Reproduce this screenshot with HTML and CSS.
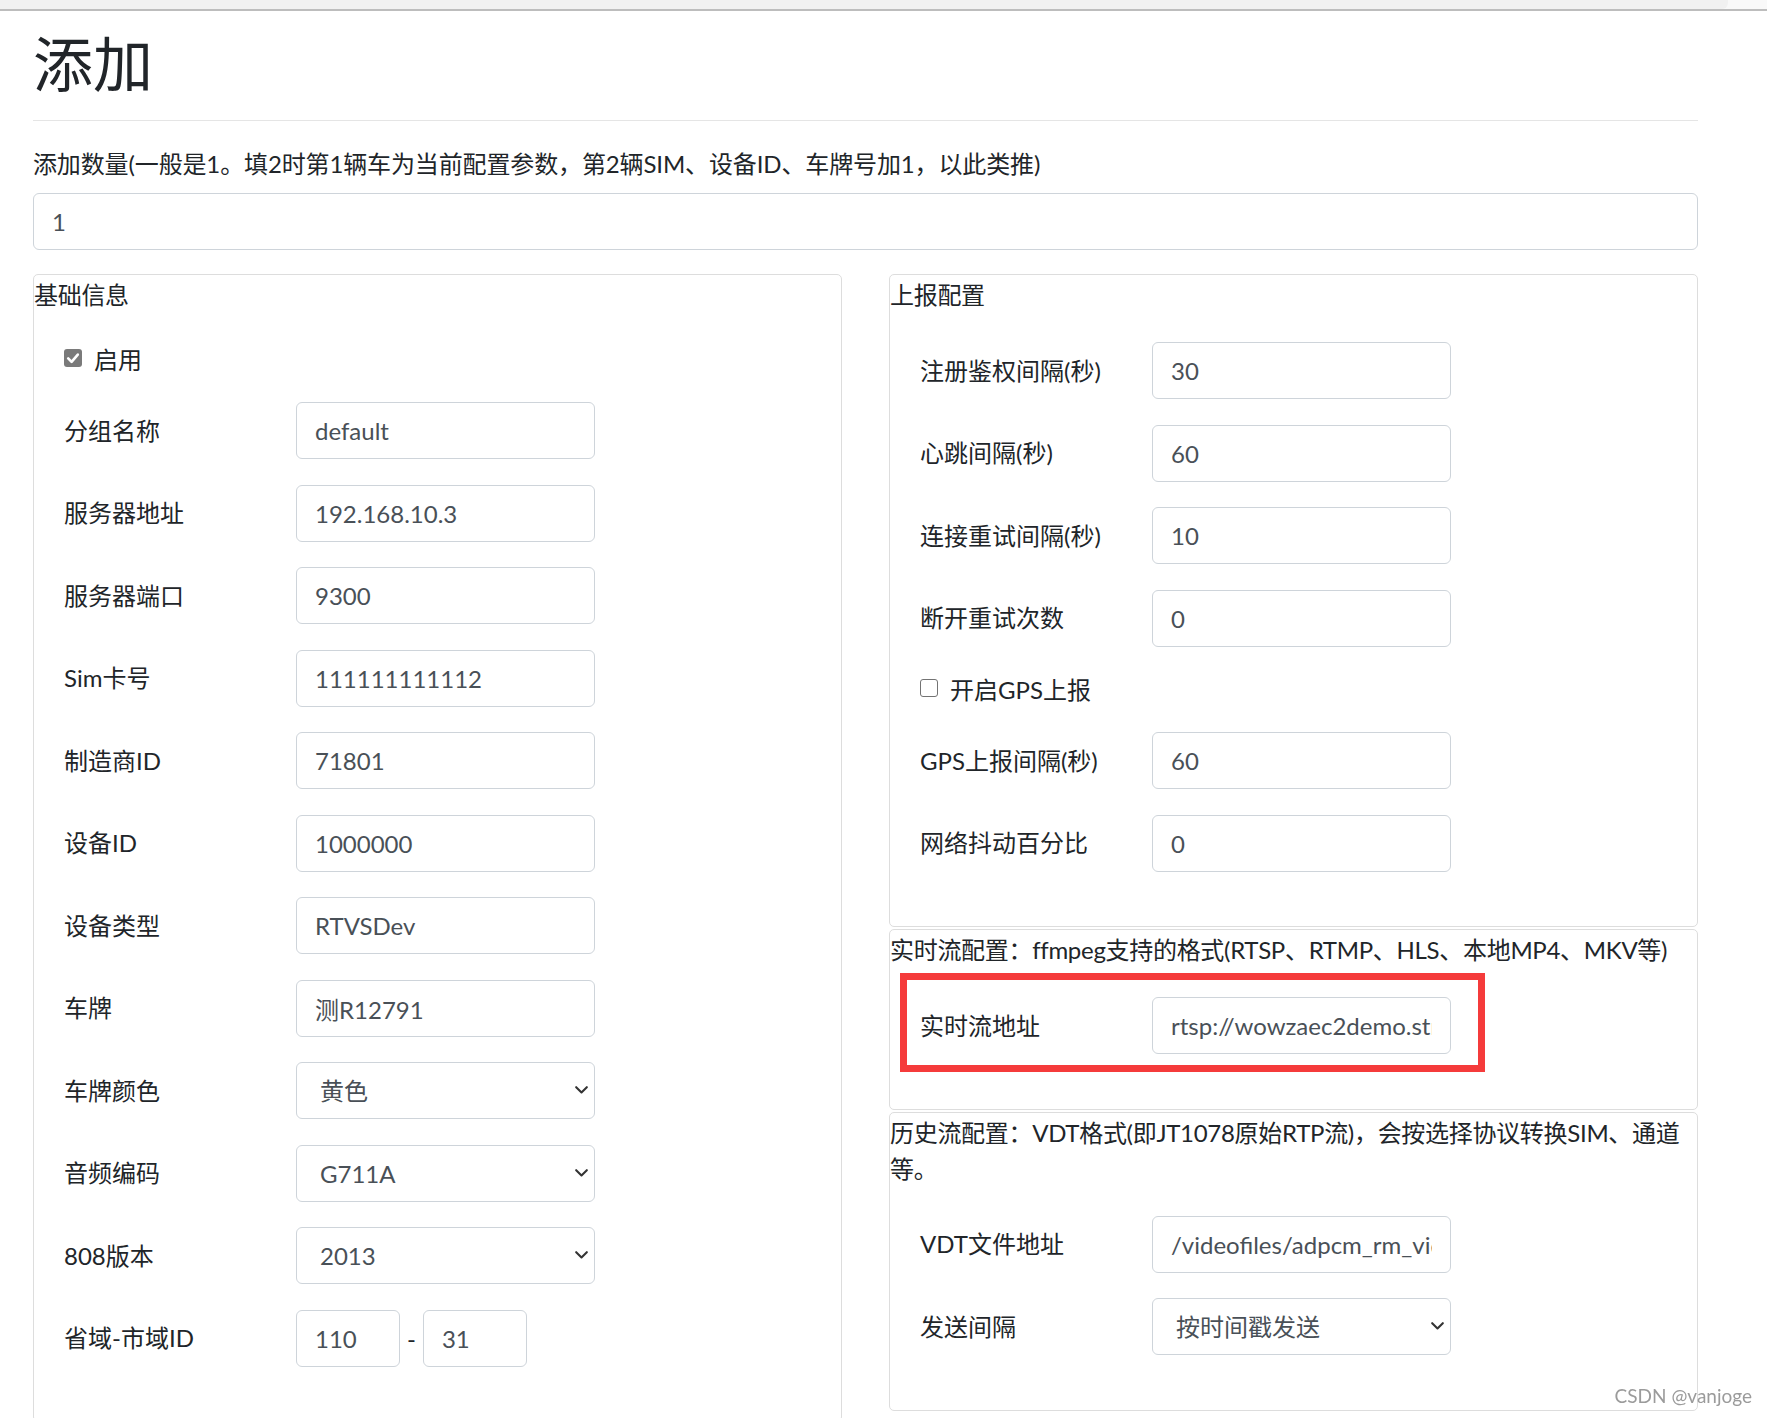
FILE: index.html
```html
<!DOCTYPE html>
<html lang="zh-CN">
<head>
<meta charset="utf-8">
<title>添加</title>
<link rel="stylesheet" href="styles.css">
</head>
<body>
<div class="chrome"><div class="chrome-tab"></div></div>
<main class="page">
  <h1 class="page-title">添加</h1>
  <div class="divider"></div>
  <div class="count-group">
    <label class="count-label">添加数量(一般是1。填2时第1辆车为当前配置参数，第2辆SIM、设备ID、车牌号加1，以此类推)</label>
    <input class="control control-wide" value="1">
  </div>
  <div class="columns">
    <section class="box">
      <div class="box-title">基础信息</div>
      <div class="box-body">
        <div class="check-row">
          <span class="check check-on"><svg viewBox="0 0 18 18" width="18" height="18"><path d="M4.2 9.4 L7.6 12.8 L13.8 5.6" fill="none" stroke="#fff" stroke-width="2.6" stroke-linecap="round" stroke-linejoin="round"/></svg></span>
          <span>启用</span>
        </div>
        <div class="field"><label class="field-label">分组名称</label><input class="control" value="default"></div>
        <div class="field"><label class="field-label">服务器地址</label><input class="control" value="192.168.10.3"></div>
        <div class="field"><label class="field-label">服务器端口</label><input class="control" value="9300"></div>
        <div class="field"><label class="field-label">Sim卡号</label><input class="control" value="111111111112"></div>
        <div class="field"><label class="field-label">制造商ID</label><input class="control" value="71801"></div>
        <div class="field"><label class="field-label">设备ID</label><input class="control" value="1000000"></div>
        <div class="field"><label class="field-label">设备类型</label><input class="control" value="RTVSDev"></div>
        <div class="field"><label class="field-label">车牌</label><input class="control" value="测R12791"></div>
        <div class="field"><label class="field-label">车牌颜色</label>
          <div class="select-wrap">
            <select class="control select"><option>黄色</option><option>蓝色</option></select>
            <svg class="chev" viewBox="0 0 13 8" width="13" height="8"><path d="M1.2 1.2 L6.5 6.4 L11.8 1.2" fill="none" stroke="#333" stroke-width="2.1" stroke-linecap="round" stroke-linejoin="round"/></svg>
          </div>
        </div>
        <div class="field"><label class="field-label">音频编码</label>
          <div class="select-wrap">
            <select class="control select"><option>G711A</option><option>G711U</option></select>
            <svg class="chev" viewBox="0 0 13 8" width="13" height="8"><path d="M1.2 1.2 L6.5 6.4 L11.8 1.2" fill="none" stroke="#333" stroke-width="2.1" stroke-linecap="round" stroke-linejoin="round"/></svg>
          </div>
        </div>
        <div class="field"><label class="field-label">808版本</label>
          <div class="select-wrap">
            <select class="control select"><option>2013</option><option>2019</option></select>
            <svg class="chev" viewBox="0 0 13 8" width="13" height="8"><path d="M1.2 1.2 L6.5 6.4 L11.8 1.2" fill="none" stroke="#333" stroke-width="2.1" stroke-linecap="round" stroke-linejoin="round"/></svg>
          </div>
        </div>
        <div class="field"><label class="field-label">省域-市域ID</label>
          <div class="pair">
            <input class="control control-narrow" value="110">
            <span class="dash">-</span>
            <input class="control control-narrow" value="31">
          </div>
        </div>
      </div>
    </section>
    <div class="stack">
      <section class="box">
        <div class="box-title">上报配置</div>
        <div class="box-body">
          <div class="field"><label class="field-label">注册鉴权间隔(秒)</label><input class="control" value="30"></div>
          <div class="field"><label class="field-label">心跳间隔(秒)</label><input class="control" value="60"></div>
          <div class="field"><label class="field-label">连接重试间隔(秒)</label><input class="control" value="10"></div>
          <div class="field"><label class="field-label">断开重试次数</label><input class="control" value="0"></div>
          <div class="check-row">
            <span class="check check-off"></span>
            <span>开启GPS上报</span>
          </div>
          <div class="field"><label class="field-label">GPS上报间隔(秒)</label><input class="control" value="60"></div>
          <div class="field"><label class="field-label">网络抖动百分比</label><input class="control" value="0"></div>
        </div>
      </section>
      <section class="box box-live">
        <div class="box-title">实时流配置：ffmpeg支持的格式(RTSP、RTMP、HLS、本地MP4、MKV等)</div>
        <div class="box-body">
          <div class="field"><label class="field-label">实时流地址</label><input class="control" value="rtsp://wowzaec2demo.streamlock.net/vod/mp4:BigBuckBunny_115k.mov"></div>
        </div>
        <div class="annot"></div>
      </section>
      <section class="box">
        <div class="box-title">历史流配置：VDT格式(即JT1078原始RTP流)，会按选择协议转换SIM、通道等。</div>
        <div class="box-body">
          <div class="field"><label class="field-label">VDT文件地址</label><input class="control" value="/videofiles/adpcm_rm_video.vdt"></div>
          <div class="field"><label class="field-label">发送间隔</label>
            <div class="select-wrap">
              <select class="control select"><option>按时间戳发送</option><option>固定间隔发送</option></select>
              <svg class="chev" viewBox="0 0 13 8" width="13" height="8"><path d="M1.2 1.2 L6.5 6.4 L11.8 1.2" fill="none" stroke="#333" stroke-width="2.1" stroke-linecap="round" stroke-linejoin="round"/></svg>
            </div>
          </div>
        </div>
      </section>
    </div>
  </div>
</main>
<div class="watermark">CSDN @vanjoge</div>
</body>
</html>
```
FILE: styles.css
```css
html, body {
  margin: 0;
  padding: 0;
  overflow: hidden;
  background: #ffffff;
}

body {
  font-family: Lato, "Noto Sans CJK SC", sans-serif;
  font-size: 24px;
  line-height: 1.5;
  color: #212529;
}

.chrome {
  height: 9px;
  background: #f9f9f9;
  border-bottom: 2px solid #bdbdbd;
}

.chrome-tab {
  width: 1728px;
  height: 9px;
  background: #f1f1f1;
  border-bottom-right-radius: 6px;
}

.page {
  width: 1665px;
  margin-left: 33px;
}

.page-title {
  margin: 17px 0 0;
  font-size: 60px;
  line-height: 72px;
  font-weight: 400;
}

.divider {
  height: 0;
  margin: 20px 0 25px;
  border-top: 1px solid #e5e5e5;
}

.count-group {
  margin-bottom: 24px;
}

.count-label {
  display: block;
  margin-bottom: 11px;
  letter-spacing: -0.13px;
}

.control {
  box-sizing: border-box;
  width: 299px;
  height: 57px;
  margin: 0;
  padding: 0 18px;
  border: 1px solid #ced4da;
  border-radius: 6px;
  background: #ffffff;
  font-family: inherit;
  font-size: 24px;
  color: #495057;
  outline: none;
}

.control-wide {
  width: 100%;
}

.control-narrow {
  width: 104px;
}

.columns {
  display: grid;
  grid-template-columns: 809px 809px;
  column-gap: 47px;
  align-items: start;
}

.stack {
  display: flex;
  flex-direction: column;
  gap: 2px;
}

.box {
  position: relative;
  border: 1px solid #dddddd;
  border-radius: 5px;
  padding: 2px 0 29px;
}

.box-title {
  line-height: 36px;
  margin-bottom: 29px;
  letter-spacing: -0.3px;
}

.box-body {
  padding-left: 30px;
}

.check-row {
  display: flex;
  align-items: flex-start;
  height: 36px;
  line-height: 36px;
  margin-bottom: 24px;
}

.check {
  flex: none;
  box-sizing: border-box;
  width: 18px;
  height: 18px;
  margin: 7px 12px 0 0;
  border-radius: 3px;
}

.check-on {
  display: flex;
  background: #7a7a7a;
}

.check-off {
  border: 1.5px solid #737373;
  background: #ffffff;
}

.field {
  display: flex;
  align-items: flex-start;
  height: 58.5px;
  margin-bottom: 24px;
}

.field-label {
  flex: 0 0 232px;
  padding-top: 10.5px;
  line-height: 36px;
}

.select-wrap {
  position: relative;
  width: 299px;
  height: 57px;
}

.select {
  width: 100%;
  -webkit-appearance: none;
  appearance: none;
  padding: 0 32px 0 23px;
}

.chev {
  position: absolute;
  right: 7px;
  top: 24px;
  pointer-events: none;
}

.pair {
  display: flex;
  align-items: center;
}

.dash {
  margin: 0 7px;
  line-height: 57px;
}

.annot {
  position: absolute;
  left: 10px;
  top: 43px;
  box-sizing: border-box;
  width: 585px;
  height: 99px;
  border: 7px solid #f53b3b;
  pointer-events: none;
}

.watermark {
  position: fixed;
  top: 1383px;
  right: 15px;
  font-size: 19px;
  line-height: 26px;
  color: #9b9b9b;
}
```
